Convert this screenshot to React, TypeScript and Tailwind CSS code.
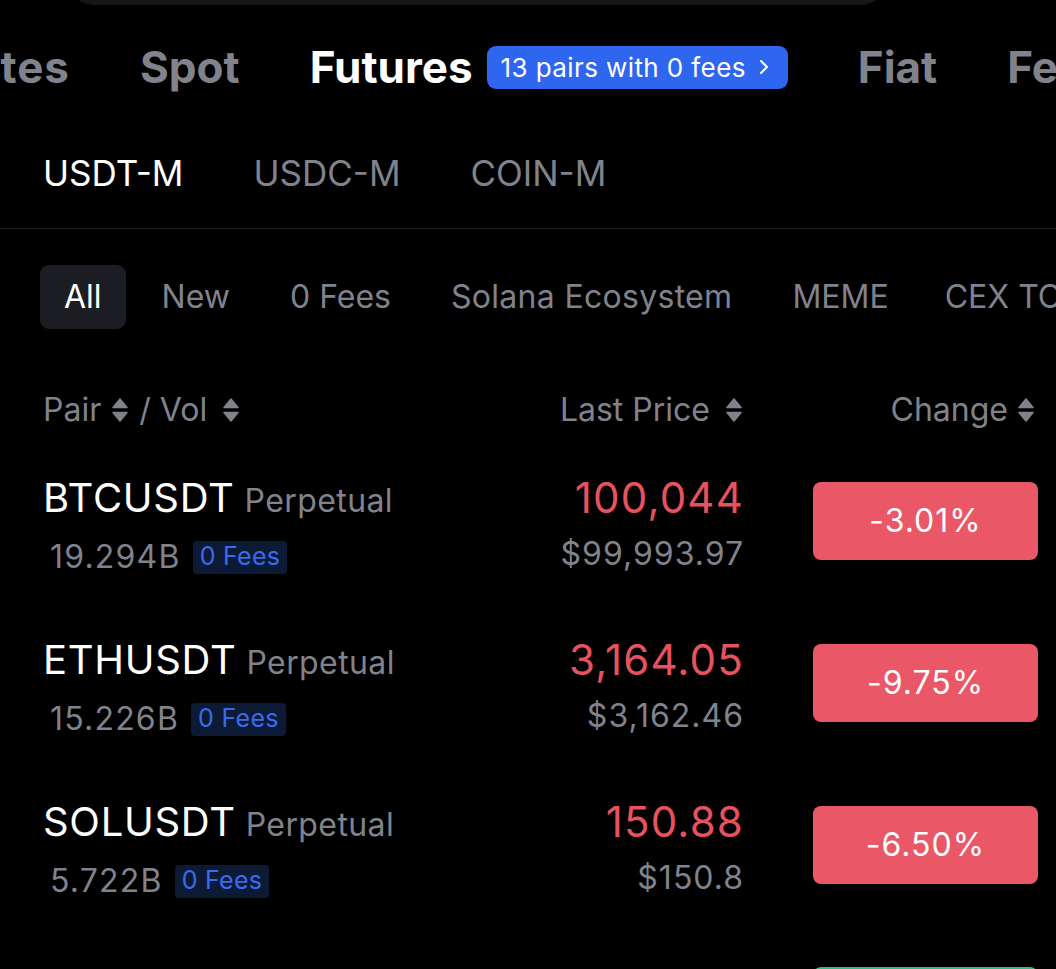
import { ChevronRight } from "lucide-react";

const rows = [
  { pair: "BTCUSDT", vol: "19.294B", price: "100,044", usd: "$99,993.97", change: "-3.01%", up: false },
  { pair: "ETHUSDT", vol: "15.226B", price: "3,164.05", usd: "$3,162.46", change: "-9.75%", up: false },
  { pair: "SOLUSDT", vol: "5.722B", price: "150.88", usd: "$150.8", change: "-6.50%", up: false },
];

function SortIcon() {
  return (
    <svg width="20" height="30" viewBox="0 0 20 30" className="shrink-0">
      <path d="M3 12.5 L10 4 L17 12.5 Z" fill="#80838c" strokeLinejoin="round" stroke="#80838c" strokeWidth="1.5" />
      <path d="M3 17.5 L10 26 L17 17.5 Z" fill="#80838c" strokeLinejoin="round" stroke="#80838c" strokeWidth="1.5" />
    </svg>
  );
}

export default function App() {
  return (
    <div
      className="w-[1056px] h-[969px] overflow-hidden bg-black text-[#eaecef] whitespace-nowrap"
      style={{ fontFamily: "Inter, 'Noto Sans', sans-serif" }}
    >
      {/* search bar remnant */}
      <div className="h-[5px] overflow-hidden pl-[65px]">
        <div className="w-[825px] h-[60px] -mt-[55px] rounded-full bg-[#15161a]" />
      </div>

      {/* Top tabs */}
      <div className="h-[124px] flex items-center gap-[70px] text-[44px] font-bold text-[#80838c]">
        <div className="w-[70px] overflow-hidden flex justify-end shrink-0">
          <span className="shrink-0 tracking-[1px]">Favorites</span>
        </div>
        <span className="shrink-0">Spot</span>
        <div className="flex items-center gap-[14px] shrink-0">
          <span className="text-white">Futures</span>
          <div className="h-[43px] pl-[14px] pr-[12px] rounded-[9px] bg-[#2f66f0] flex items-center gap-[6px] text-[26px] tracking-[0.4px] font-normal text-white">
            <span>13 pairs with 0 fees</span>
            <ChevronRight size={24} strokeWidth={2} />
          </div>
        </div>
        <span className="shrink-0">Fiat</span>
        <span className="shrink-0">Features</span>
      </div>

      {/* Sub tabs */}
      <div className="h-[88px] mb-[11px] flex items-center gap-[70px] pl-[43px] text-[35px] text-[#80838c]">
        <span className="text-white">USDT-M</span>
        <span>USDC-M</span>
        <span>COIN-M</span>
      </div>
      <div className="h-px bg-[#1e2026]" />

      {/* Chips */}
      <div className="mt-[36px] h-[64px] flex items-center gap-3 pl-[40px] text-[32px] text-[#80838c]">
        <div className="h-[64px] px-6 rounded-[9px] bg-[#1c1d22] text-white flex items-center">All</div>
        <div className="px-6">New</div>
        <div className="px-6">0 Fees</div>
        <div className="px-6 tracking-[0.3px]">Solana Ecosystem</div>
        <div className="px-6">MEME</div>
        <div className="pl-5">CEX TOP</div>
      </div>

      {/* Header */}
      <div className="mt-[51px] h-[60px] flex items-center pl-[43px] pr-[20px] text-[32px] text-[#80838c]">
        <div className="flex-1 flex items-center gap-[9px]">
          <span>Pair</span>
          <SortIcon />
          <span>/ Vol</span>
          <span className="ml-[5px] flex"><SortIcon /></span>
        </div>
        <div className="flex items-center gap-[14px]">
          <span>Last Price</span>
          <SortIcon />
        </div>
        <div className="w-[292px] flex items-center justify-end gap-[8px]">
          <span>Change</span>
          <SortIcon />
        </div>
      </div>

      {/* Rows */}
      {rows.map((r) => (
        <div key={r.pair} className="h-[162px] pt-[34px] flex items-start pl-[43px] pr-[18px]">
          <div className="flex-1 flex flex-col items-start">
            <div className="leading-[48px] flex items-baseline gap-[10px]">
              <span className="text-[40px] text-white tracking-[0.7px]">{r.pair}</span>
              <span className="text-[32px] text-[#80838c] tracking-[0.4px]">Perpetual</span>
            </div>
            <div className="mt-[14px] h-[36px] flex items-center gap-[12px] pl-[7px]">
              <span className="text-[32px] text-[#80838c] tracking-[1.2px]">{r.vol}</span>
              <span className="h-[33px] px-[7px] rounded-[4px] bg-[#0c1a36] text-[#3a6bec] text-[25px] tracking-[0.3px] flex items-center">
                0 Fees
              </span>
            </div>
          </div>
          <div className="flex flex-col items-end">
            <span className="leading-[48px] text-[42px] tracking-[1.2px] text-[#e8525f]">{r.price}</span>
            <span className="mt-[14px] leading-[36px] text-[32px] text-[#80838c] tracking-[1px]">{r.usd}</span>
          </div>
          <div className="ml-[69px] mt-[8px] w-[225px] h-[78px] rounded-[8px] flex items-center justify-center text-[32px] tracking-[1px] text-white bg-[#ea5766]">
            {r.change}
          </div>
        </div>
      ))}

      {/* next row, just entering view */}
      <div className="pt-[41px] flex justify-end pr-[18px]">
        <div className="w-[225px] h-[78px] rounded-[8px] bg-[#2ebd85]" />
      </div>
    </div>
  );
}
